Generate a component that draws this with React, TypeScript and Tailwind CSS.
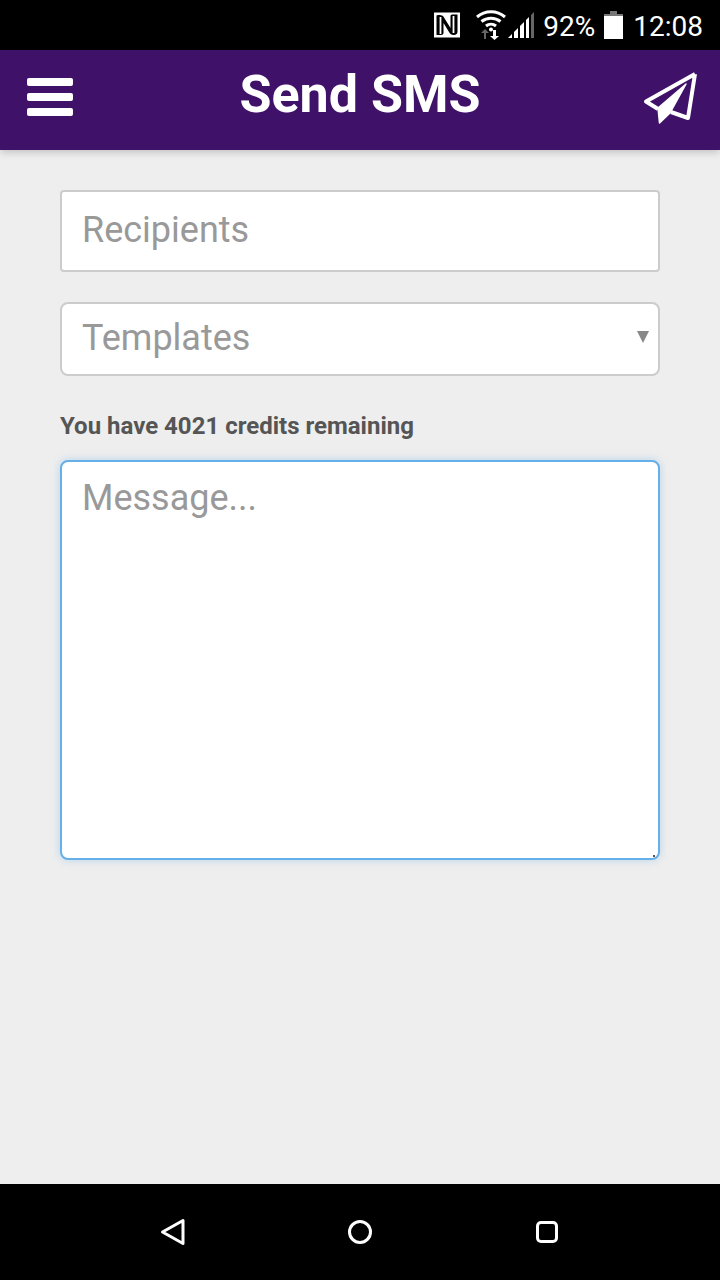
import React from 'react';

const StatusBar: React.FC = () => (
  <div className="h-[50px] bg-black flex items-center justify-end text-white text-[28px] leading-none pr-[17px]">
    {/* NFC */}
    <svg width="28" height="26" viewBox="0 0 28 26" className="mr-[15px]">
      <rect x="1" y="0.5" width="26" height="25" fill="#fff" />
      <path d="M3.500 3.500C7 2.500 9.500 3 11 5.500L17.500 16V4c0-1 1-1.500 2.500-1.500h4.500v17c0 2-1 3.500-4 3.500-2 0-3.500-1-4.500-3L10.500 11v10c0 1-1 2-2.500 2H3.500z" fill="#000" />
      <path d="M7.500 5v17M20.500 4v17" stroke="#fff" strokeWidth="1.800" />
    </svg>
    {/* wifi + data arrows */}
    <svg width="30" height="30" viewBox="0 0 30 30" className="mr-[2px]">
      <path d="M1 7C9 0 21 0 29 7M5.500 11.500C11 7 19 7 24.500 11.500M10 16c3-2.500 7-2.500 10 0" fill="none" stroke="#fff" strokeWidth="3" />
      <circle cx="15" cy="19.500" r="2" fill="#fff" />
      <path d="M8 29v-6H5l4-4 4 4h-3v6z" fill="#666" />
      <path d="M17 20h3v6h3l-4.500 4-4.500-4h3z" fill="#fff" />
    </svg>
    {/* signal */}
    <svg width="27" height="28" viewBox="0 0 27 28" className="mr-[8px]">
      <path d="M0 27l4-4v4z" fill="#fff" />
      <path d="M6 27v-6l4-4v10z" fill="#fff" />
      <path d="M12 27V15l4-4v16z" fill="#fff" />
      <path d="M18 27V9l3-3v21z" fill="#fff" />
      <path d="M23 27V4l3-3v26z" fill="#666" />
    </svg>
    <span className="mr-[9px] pt-[3px]">92%</span>
    {/* battery */}
    <svg width="19" height="28" viewBox="0 0 19 28" className="mr-[10px]">
      <path d="M6 0h7v3H6z" fill="#777" />
      <path d="M0 3h19v3H0z" fill="#777" />
      <path d="M0 5h19v23H0z" fill="#fff" />
    </svg>
    <span className="pt-[3px]">12:08</span>
  </div>
);

const Header: React.FC = () => (
  <header className="relative z-10 h-[100px] bg-[#3f1169] flex items-center px-[22px] pb-[6px] shadow-[0_2px_8px_rgba(0,0,0,0.2)]">
    <div className="flex-1">
      <div className="ml-[5px] w-[46px] flex flex-col gap-[7px]">
        <div className="h-[8px] bg-white rounded-[2px]" />
        <div className="h-[8px] bg-white rounded-[2px]" />
        <div className="h-[8px] bg-white rounded-[2px]" />
      </div>
    </div>
    <h1 className="text-white font-bold text-[52px] leading-none pb-[4px]">Send SMS</h1>
    <div className="flex-1 flex justify-end">
      <svg width="56" height="56" viewBox="0 0 56 56">
        <path d="M53 5 4 32.500 16 40M53 5 46 49 29 43" fill="none" stroke="#fff" strokeWidth="4" strokeLinejoin="round" />
        <path d="M44 15 16 39 17.500 54 28 44z" fill="#fff" stroke="#fff" strokeWidth="1.500" strokeLinejoin="round" />
      </svg>
    </div>
  </header>
);

const NavBar: React.FC = () => (
  <nav className="h-[96px] bg-black flex items-center justify-center gap-[163px]">
    <svg width="26" height="28" viewBox="0 0 26 28">
      <path d="M24 2.500v23L3.500 14z" fill="none" stroke="#fff" strokeWidth="3" strokeLinejoin="round" />
    </svg>
    <svg width="24" height="24" viewBox="0 0 24 24">
      <circle cx="12" cy="12" r="10.500" fill="none" stroke="#fff" strokeWidth="3" />
    </svg>
    <svg width="26" height="24" viewBox="0 0 26 24">
      <rect x="2.500" y="2.500" width="19" height="19" rx="3.500" fill="none" stroke="#fff" strokeWidth="3" />
    </svg>
  </nav>
);

export default function App() {
  return (
    <div className="h-[1280px] w-[720px] flex flex-col font-[Roboto,sans-serif] bg-[#eeeeee] overflow-hidden">
      <StatusBar />
      <Header />

      <main className="flex-1 px-[60px] pt-[40px] flex flex-col">
        <input
          placeholder="Recipients"
          className="h-[82px] w-full bg-white border-2 border-[#cccccc] rounded-[4px] px-5 pb-[2px] text-[36px] outline-none placeholder:text-[#999999]"
        />

        <div className="relative mt-[30px]">
          <select
            defaultValue=""
            className="h-[74px] w-full appearance-none bg-white border-2 border-[#cccccc] rounded-[8px] px-5 pb-[2px] text-[36px] text-[#999999] outline-none"
          >
            <option value="">Templates</option>
          </select>
          <span className="absolute right-[11px] top-[29px] w-0 h-0 border-x-[6px] border-x-transparent border-t-[12px] border-t-[#888888]" />
        </div>

        <label className="mt-[36px] text-[24px] leading-[28px] font-bold text-[#555555]">
          You have 4021 credits remaining
        </label>

        {/* tiny resize grip sits over the corner */}
        <div className="relative mt-[20px]">
          <textarea
            placeholder="Message..."
            className="block h-[400px] w-full resize-none bg-white border-2 border-[#66afe9] rounded-[8px] px-5 py-[14px] text-[36px] leading-[44px] outline-none shadow-[0_0_8px_rgba(102,175,233,0.4)] placeholder:text-[#999999]"
          />
          <span className="absolute right-[5px] bottom-[3px] w-[2px] h-[2px] bg-[#555555]" />
        </div>
      </main>

      <NavBar />
    </div>
  );
}
